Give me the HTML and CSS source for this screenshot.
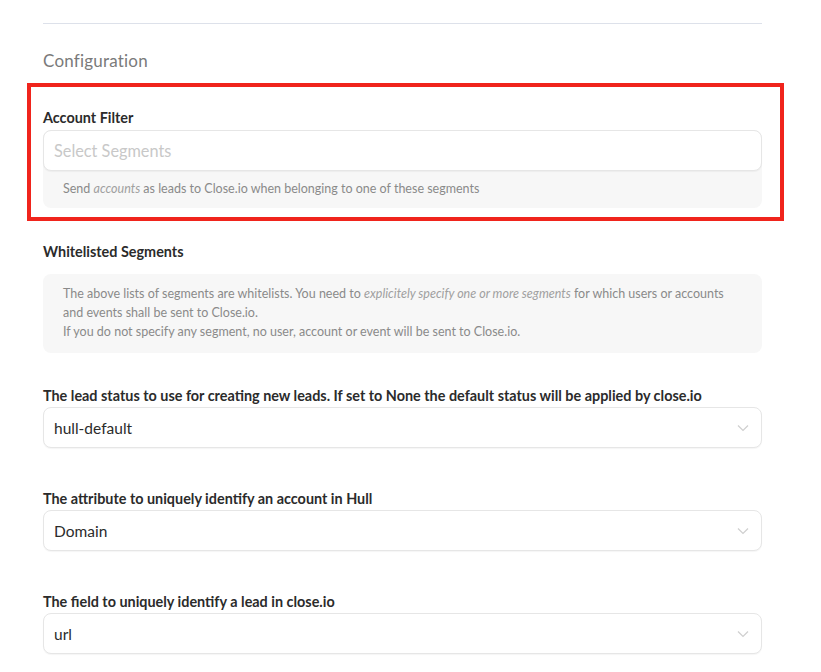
FILE: index.html
```html
<!DOCTYPE html>
<html>
<head>
<meta charset="utf-8">
<link rel="stylesheet" href="styles.css">
</head>
<body>
<div class="page">
  <hr class="divider">
  <h2 class="section-title">Configuration</h2>

  <div class="field field-first">
    <label class="label">Account Filter</label>
    <div class="input-group">
      <div class="input placeholder">Select Segments</div>
      <div class="help help-attached">Send <em>accounts</em> as leads to Close.io when belonging to one of these segments</div>
    </div>
  </div>

  <div class="field field-ws">
    <label class="label">Whitelisted Segments</label>
    <div class="help help-box">
      <p>The above lists of segments are whitelists. You need to <em>explicitely specify one or more segments</em> for which users or accounts<br>and events shall be sent to Close.io.</p>
      <p>If you do not specify any segment, no user, account or event will be sent to Close.io.</p>
    </div>
  </div>

  <div class="field field-select">
    <label class="label">The lead status to use for creating new leads. If set to None the default status will be applied by close.io</label>
    <div class="input select"><span>hull-default</span><svg class="chev" width="12" height="8" viewBox="0 0 12 8"><path d="M1 1.5 L6 6.5 L11 1.5" fill="none" stroke="#cfcfcf" stroke-width="1.2"/></svg></div>
  </div>

  <div class="field field-select">
    <label class="label">The attribute to uniquely identify an account in Hull</label>
    <div class="input select"><span>Domain</span><svg class="chev" width="12" height="8" viewBox="0 0 12 8"><path d="M1 1.5 L6 6.5 L11 1.5" fill="none" stroke="#cfcfcf" stroke-width="1.2"/></svg></div>
  </div>

  <div class="field field-select">
    <label class="label">The field to uniquely identify a lead in close.io</label>
    <div class="input select"><span>url</span><svg class="chev" width="12" height="8" viewBox="0 0 12 8"><path d="M1 1.5 L6 6.5 L11 1.5" fill="none" stroke="#cfcfcf" stroke-width="1.2"/></svg></div>
  </div>

  <div class="highlight"></div>
</div>
</body>
</html>
```
FILE: styles.css
```css
* { box-sizing: border-box; }
html, body { margin: 0; padding: 0; background: #fff; }
body { font-family: "Lato", "Liberation Sans", sans-serif; color: #2a2a2a; }
.page { position: relative; width: 821px; height: 672px; overflow: hidden; padding: 0 59px 0 43px; }
.divider { margin: 23px 0 0 0; border: 0; border-top: 1px solid #dde1ea; height: 0; }
.section-title { margin: 26px 0 0 0; font-size: 17px; font-weight: 400; color: #7a7a7a; line-height: 22px; letter-spacing: 0.2px; }
.field { display: flex; flex-direction: column; }
.field-first { margin-top: 37px; }
.label { font-size: 14.4px; font-weight: 700; color: #2b2b2b; line-height: 18px; margin-bottom: 3px; }
.input-group { border-radius: 8px; background: #f7f7f7; }
.input { height: 41px; border: 1px solid #e6e6e6; border-radius: 8px; background: #fff; display: flex; align-items: center; padding: 0 10px; font-size: 15.5px; color: #2b2b2b; box-shadow: 0 1px 1px rgba(0,0,0,0.04); }
.placeholder { color: #c8c8c8; font-size: 16.3px; }
.help { font-size: 12.5px; color: #8a8a8a; line-height: 19px; }
.help em { color: #a0a0a0; }
.help-attached { padding: 8px 20px 10px 20px; }
.field-ws { margin-top: 35px; }
.field-ws .label { margin-bottom: 13px; }
.help-box { background: #f7f7f7; border-radius: 8px; padding: 10px 20px 12px 20px; }
.help-box p { margin: 0; }
.field-select { margin-top: 42px; }
.field-select .label { margin-bottom: 2px; }
.field-ws + .field-select { margin-top: 34px; }
.select { justify-content: space-between; padding-right: 12px; }
.chev { display: block; }
.highlight { position: absolute; left: 27px; top: 83px; width: 757px; height: 138px; border: 4px solid #f0241c; pointer-events: none; }
```
